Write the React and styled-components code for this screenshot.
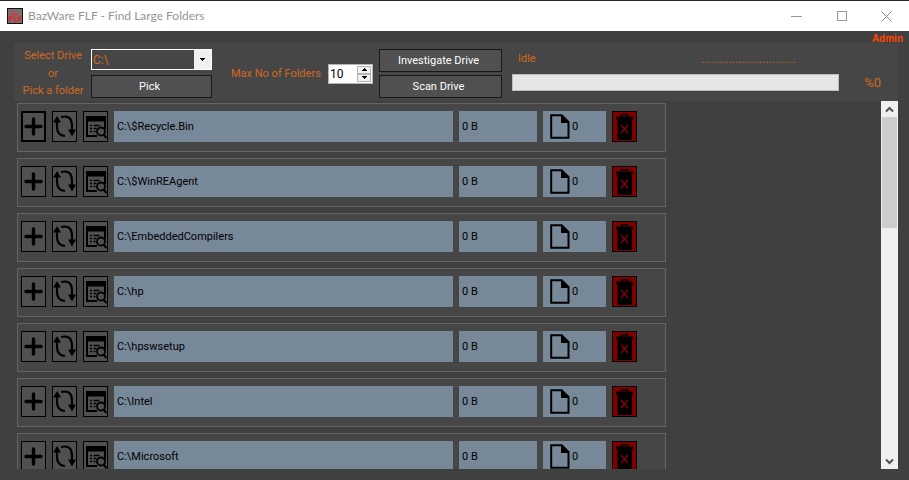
import React, { useState } from "react";
import styled, { createGlobalStyle } from "styled-components";

const GlobalStyle = createGlobalStyle`
  * { box-sizing: border-box; }
  body {
    margin: 0;
    background: #404040;
    font-family: Roboto, "Liberation Sans", sans-serif;
    font-size: 11px;
    line-height: 14px;
  }
  button, input, select { font: inherit; margin: 0; padding: 0; border-radius: 0; }
  svg { display: block; }
`;

const Window = styled.div`
  display: flex;
  flex-direction: column;
  height: 100vh;
  overflow: hidden;
  background: #404040;
`;

const TitleBar = styled.header`
  display: flex;
  align-items: center;
  height: 31px;
  flex: none;
  padding-left: 7px;
  border-top: 1px solid #2b2631;
  background: #fff;
`;

const Title = styled.h1`
  flex: 1;
  margin: 0 0 0 5px;
  color: #949494;
  font: 12px/16px Lato, "Open Sans", sans-serif;
`;

const CaptionButton = styled.button`
  display: grid;
  place-items: center;
  width: 45px;
  height: 30px;
  border: 0;
  background: transparent;
`;

const AdminLine = styled.div`
  flex: none;
  height: 12px;
  padding: 2px 6px 0 0;
  color: #ff4500;
  font: bold 10px/12px "Liberation Sans", sans-serif;
  text-align: right;
`;

const Toolbar = styled.section`
  display: flex;
  flex: none;
  height: 58px;
  margin: 0 11px 0 14px;
  padding: 6px 17px 3px 9px;
  background: #464646;
  color: #d2691e;
`;

const PickLabels = styled.div`
  display: flex;
  flex-direction: column;
  justify-content: space-between;
  align-items: center;
  width: 60px;
  white-space: nowrap;
`;

const Stack = styled.div`
  display: flex;
  flex-direction: column;
  justify-content: space-between;
  width: ${(p) => p.$width}px;
  margin-left: ${(p) => p.$gap}px;
`;

const SelectFrame = styled.div`
  display: flex;
  position: relative;
  height: 21px;
  border: 1px solid #fff;
  background: #464646;
`;

const DriveSelect = styled.select`
  width: 100%;
  padding-left: 1px;
  border: 0;
  appearance: none;
  background: transparent;
  color: #d2691e;
  font-size: 12px;
`;

const SelectArrow = styled.span`
  position: absolute;
  inset: 0 0 0 auto;
  display: grid;
  place-items: center;
  width: 17px;
  background: #f0f0f0;
  pointer-events: none;
`;

const PushButton = styled.button`
  height: 23px;
  padding-right: 4px;
  border: 1px solid #181818;
  background: #505050;
  color: #fff;
`;

const MaxGroup = styled.div`
  display: flex;
  align-items: center;
  gap: 12px;
  margin-left: 19px;
  white-space: nowrap;
`;

const MaxLabel = styled.label`
  width: 85px;
`;

const Spinner = styled.div`
  display: flex;
  width: 45px;
  height: 20px;
  padding: 1px;
  border: 1px solid #b4b4b4;
  background: #fff;
`;

const SpinnerInput = styled.input`
  flex: 1;
  min-width: 0;
  border: 0;
  outline: 0;
  background: #fff;
  color: #000;
  font-size: 12px;
`;

const SpinnerButtons = styled.div`
  display: grid;
  grid-template-rows: 1fr 1fr;
  width: 14px;
`;

const StepButton = styled.button`
  display: grid;
  place-items: center;
  border: 1px solid #b4b4b4;
  background: #f0f0f0;
`;

const Status = styled.div`
  flex: 1;
  min-width: 0;
  margin-left: 10px;
`;

const StatusLine = styled.div`
  display: flex;
  justify-content: space-between;
  height: 25px;
  padding: 3px 43px 0 6px;
`;

const Dots = styled.span`
  font: 11px/14px "Liberation Sans", sans-serif;
`;

const ProgressBar = styled.div`
  height: 17px;
  border: 1px solid #bcbcbc;
  background: #e6e6e6;
`;

const ProgressFill = styled.div`
  height: 100%;
  background: #06b025;
`;

const Percent = styled.div`
  align-self: flex-end;
  width: 42px;
  padding-bottom: 8px;
  font-size: 13px;
  text-align: right;
`;

const ListPane = styled.main`
  display: flex;
  flex: 1;
  min-height: 0;
  margin: 0 11px 11px 14px;
`;

const FolderList = styled.ul`
  display: flex;
  flex: 1;
  flex-direction: column;
  gap: 6px;
  margin: 0;
  padding: 2px 3px 0;
  overflow: hidden;
  list-style: none;
`;

const FolderRow = styled.li`
  display: flex;
  flex: none;
  gap: 6px;
  height: 49px;
  width: 100%;
  max-width: 649px;
  padding: 7px 28px 9px 3px;
  border: 1px solid #646464;
  background: #464646;
`;

const IconButton = styled.button`
  display: grid;
  place-items: center;
  flex: none;
  width: 25px;
  height: 31px;
  border: ${(p) => (p.$active ? 2 : 1)}px solid #000;
  background: ${(p) => (p.$danger ? "#800000" : "#505050")};
`;

const Field = styled.div`
  display: flex;
  align-items: center;
  flex: ${(p) => (p.$width ? `0 0 ${p.$width}px` : "1")};
  height: 31px;
  padding-left: ${(p) => (p.$icon ? 7 : 3)}px;
  gap: 2px;
  background: #778899;
  color: #000;
`;

const ScrollBar = styled.div`
  display: flex;
  flex-direction: column;
  flex: none;
  width: 17px;
  background: #f0f0f0;
`;

const ScrollButton = styled.button`
  display: grid;
  place-items: center;
  height: 16px;
  flex: none;
  border: 0;
  background: #f0f0f0;
`;

const ScrollTrack = styled.div`
  flex: 1;
  padding: 0 1px;
`;

const ScrollThumb = styled.div`
  height: 33%;
  background: #cdcdcd;
`;

const Triangle = ({ up }) => (
  <svg width="5" height="3" shapeRendering="crispEdges" aria-hidden="true">
    <path d={up ? "M2 0h1v1h1v1h1v1H0V2h1V1h1z" : "M0 0h5v1H4v1H3v1H2V2H1V1H0z"} fill="#000" />
  </svg>
);

const Chevron = ({ up }) => (
  <svg width="9" height="7" aria-hidden="true">
    <path d={up ? "M1 5.5L4.5 2L8 5.5" : "M1 1.5L4.5 5L8 1.5"} fill="none" stroke="#505050" strokeWidth="2" />
  </svg>
);

const AppIcon = () => (
  <svg width="16" height="16" aria-hidden="true">
    <rect x=".5" y=".5" width="15" height="15" fill="#777071" stroke="#111" />
    <path d="M4 3.5h3M5 5.5h2M8 5.5h3M3 7h9" stroke="#df3038" fill="none" />
    <path d="M2.5 14V9h3M2.5 11.5h2.5M7.5 8.5v5h2.5M11.5 14V9h2.5M11.5 11.5H14" stroke="#e2252e" strokeWidth="1.5" fill="none" />
  </svg>
);

const PlusIcon = () => (
  <svg width="19" height="19" aria-hidden="true">
    <path d="M9.5 2v15M2 9.5h15" stroke="#000" strokeWidth="3.4" strokeLinecap="round" />
  </svg>
);

const RefreshIcon = () => (
  <svg width="23" height="23" viewBox="0 0 23 23" aria-hidden="true">
    <path d="M12 21C6 20.500 4 16.500 4 12V6M8 2c4-1 7-.5 9 1.500C18.500 5.500 19 9 19 12v4" fill="none" stroke="#000" strokeWidth="2.200" />
    <path d="M0 7.500L4.200 1L8 7.500zM15 14.500h8L19 21.500z" fill="#000" />
  </svg>
);

const InspectIcon = () => (
  <svg width="23" height="25" viewBox="0 0 23 25" aria-hidden="true">
    <path d="M2 2h20v5.500H2z" fill="#000" />
    <path d="M3 7v15h10M21 7v8" fill="none" stroke="#000" strokeWidth="2" />
    <path d="M6 11.500h2M9.500 11.500h6M6 14.500h2M9.500 14.500h3M6 17.500h2M9.500 17.500h2" stroke="#000" strokeWidth="1.300" />
    <circle cx="17" cy="17.500" r="4" fill="#505050" stroke="#000" strokeWidth="1.800" />
    <path d="M19.500 20.500l3 3.500" stroke="#000" strokeWidth="2" />
  </svg>
);

const FileIcon = () => (
  <svg width="20" height="25" viewBox="0 0 20 25" aria-hidden="true">
    <path d="M1.200 1.200h10.500l6.800 6.800v15.800H1.200z" fill="none" stroke="#000" strokeWidth="2" />
    <path d="M11 1v8h8z" fill="#000" />
  </svg>
);

const TrashIcon = () => (
  <svg width="19" height="27" viewBox="0 0 19 27" aria-hidden="true">
    <path d="M6.500 4V1.800h6V4" fill="none" stroke="#000" strokeWidth="1.500" />
    <path d="M1 3.500h17v3h-1V27H2.500V6.500H1z" fill="#000" />
    <path d="M6 12l7 8M13 12l-7 8" stroke="#900000" strokeWidth="1.200" />
  </svg>
);

const folders = ["$Recycle.Bin", "$WinREAgent", "EmbeddedCompilers", "hp", "hpswsetup", "Intel", "Microsoft"];

function Folder({ name, active }) {
  return (
    <FolderRow>
      <IconButton $active={active} aria-label={`Expand ${name}`}><PlusIcon /></IconButton>
      <IconButton aria-label={`Refresh ${name}`}><RefreshIcon /></IconButton>
      <IconButton aria-label={`Inspect ${name}`}><InspectIcon /></IconButton>
      <Field>{`C:\\${name}`}</Field>
      <Field $width={78}>0 B</Field>
      <Field $width={63} $icon><FileIcon />0</Field>
      <IconButton $danger aria-label={`Delete ${name}`}><TrashIcon /></IconButton>
    </FolderRow>
  );
}

export default function App() {
  const [limit, setLimit] = useState(10);
  const percent = 0;
  return (
    <Window>
      <GlobalStyle />
      <TitleBar>
        <AppIcon />
        <Title>BazWare FLF - Find Large Folders</Title>
        <CaptionButton aria-label="Minimize">
          <svg width="11" height="11"><path d="M0 5.5h11" stroke="#999" /></svg>
        </CaptionButton>
        <CaptionButton aria-label="Maximize">
          <svg width="10" height="10"><rect x=".5" y=".5" width="9" height="9" fill="none" stroke="#999" /></svg>
        </CaptionButton>
        <CaptionButton aria-label="Close">
          <svg width="11" height="11"><path d="M.5 .5l10 10M10.5 .5l-10 10" stroke="#888" /></svg>
        </CaptionButton>
      </TitleBar>
      <AdminLine>Admin</AdminLine>
      <Toolbar>
        <PickLabels>
          <label htmlFor="drive">Select Drive</label>
          <span>or</span>
          <span>Pick a folder</span>
        </PickLabels>
        <Stack $width={121} $gap={8}>
          <SelectFrame>
            <DriveSelect id="drive"><option>C:\</option></DriveSelect>
            <SelectArrow><Triangle /></SelectArrow>
          </SelectFrame>
          <PushButton>Pick</PushButton>
        </Stack>
        <MaxGroup>
          <MaxLabel htmlFor="limit">Max No of Folders</MaxLabel>
          <Spinner>
            <SpinnerInput id="limit" inputMode="numeric" value={limit} onChange={(e) => setLimit(Number(e.target.value) || 0)} />
            <SpinnerButtons>
              <StepButton aria-label="Increase" onClick={() => setLimit(limit + 1)}><Triangle up /></StepButton>
              <StepButton aria-label="Decrease" onClick={() => setLimit(Math.max(0, limit - 1))}><Triangle /></StepButton>
            </SpinnerButtons>
          </Spinner>
        </MaxGroup>
        <Stack $width={123} $gap={6}>
          <PushButton>Investigate Drive</PushButton>
          <PushButton>Scan Drive</PushButton>
        </Stack>
        <Status>
          <StatusLine>
            <span>Idle</span>
            <Dots>...............................</Dots>
          </StatusLine>
          <ProgressBar role="progressbar" aria-label="Scan progress" aria-valuenow={percent}>
            <ProgressFill style={{ width: `${percent}%` }} />
          </ProgressBar>
        </Status>
        <Percent>%{percent}</Percent>
      </Toolbar>
      <ListPane>
        <FolderList>
          {folders.map((name, i) => <Folder key={name} name={name} active={i === 0} />)}
        </FolderList>
        <ScrollBar>
          <ScrollButton aria-label="Scroll up"><Chevron up /></ScrollButton>
          <ScrollTrack><ScrollThumb /></ScrollTrack>
          <ScrollButton aria-label="Scroll down"><Chevron /></ScrollButton>
        </ScrollBar>
      </ListPane>
    </Window>
  );
}
